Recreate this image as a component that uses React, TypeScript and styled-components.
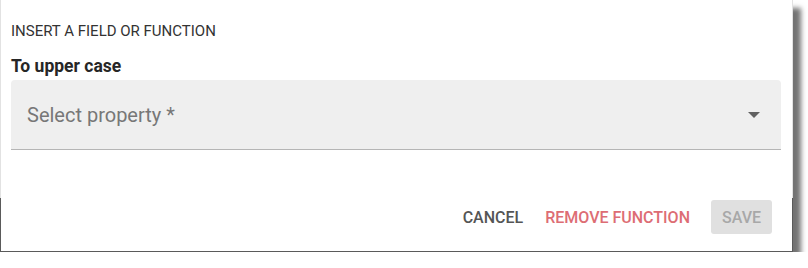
import React from 'react'
import styled, { createGlobalStyle } from 'styled-components'

const GlobalStyle = createGlobalStyle`
  html, body {
    margin: 0;
    padding: 0;
    background: #ffffff;
    font-family: Roboto, 'Liberation Sans', sans-serif;
  }
`

const Panel = styled.div`
  box-sizing: border-box;
  width: 793px;
  height: 252px;
  background: #ffffff;
  border-left: 1px solid;
  border-bottom: 1px solid #6a6a6a;
  border-right: 1px solid #cfcfcf;
  border-image: linear-gradient(to bottom, #e2e2e2 0 198px, #5a5a5a 198px) 1;
  box-shadow: 8px 8px 5px rgba(0, 0, 0, 0.55);
  padding: 20px 11px 17px 10px;
  display: flex;
  flex-direction: column;
`

const Title = styled.div`
  font-size: 15px;
  line-height: 22px;
  color: #333333;
  text-transform: uppercase;
`

const Label = styled.div`
  margin-top: 14px;
  font-size: 17.5px;
  line-height: 20px;
  font-weight: 700;
  color: #262626;
`

const SelectField = styled.div`
  margin-top: 4px;
  height: 70px;
  box-sizing: border-box;
  background: #efefef;
  border-radius: 4px 4px 0 0;
  border-bottom: 1px solid #b5b5b5;
  display: flex;
  align-items: center;
  justify-content: space-between;
  padding: 0 21px 0 16px;
`

const Placeholder = styled.span`
  font-size: 20px;
  color: #777777;
`

const Actions = styled.div`
  margin-top: auto;
  display: flex;
  justify-content: flex-end;
  align-items: center;
  padding-right: 9px;
`

const ActionButton = styled.button<{ $tone: 'neutral' | 'danger' | 'disabled' }>`
  font-family: Roboto, 'Liberation Sans', sans-serif;
  font-size: 16px;
  font-weight: 500;
  text-transform: uppercase;
  border: none;
  border-radius: 3px;
  height: 34px;
  padding: 0 11px;
  cursor: pointer;
  background: ${p => (p.$tone === 'disabled' ? '#e0e0e0' : 'transparent')};
  color: ${p =>
    p.$tone === 'danger' ? '#dd6d74' : p.$tone === 'disabled' ? '#a8a8a8' : '#555555'};
  margin-left: ${p => (p.$tone === 'disabled' ? '10px' : '0')};
`

const Arrow = () => (
  <svg width="12" height="6" viewBox="0 0 10 5">
    <path d="M0 0 L10 0 L5 5 Z" fill="#616161" />
  </svg>
)

const App: React.FC = () => {
  return (
    <>
      <GlobalStyle />
      <Panel>
        <Title>Insert a field or function</Title>
        <Label>To upper case</Label>
        <SelectField>
          <Placeholder>Select property *</Placeholder>
          <Arrow />
        </SelectField>
        <Actions>
          <ActionButton $tone="neutral">Cancel</ActionButton>
          <ActionButton $tone="danger">Remove function</ActionButton>
          <ActionButton $tone="disabled">Save</ActionButton>
        </Actions>
      </Panel>
    </>
  )
}

export default App
